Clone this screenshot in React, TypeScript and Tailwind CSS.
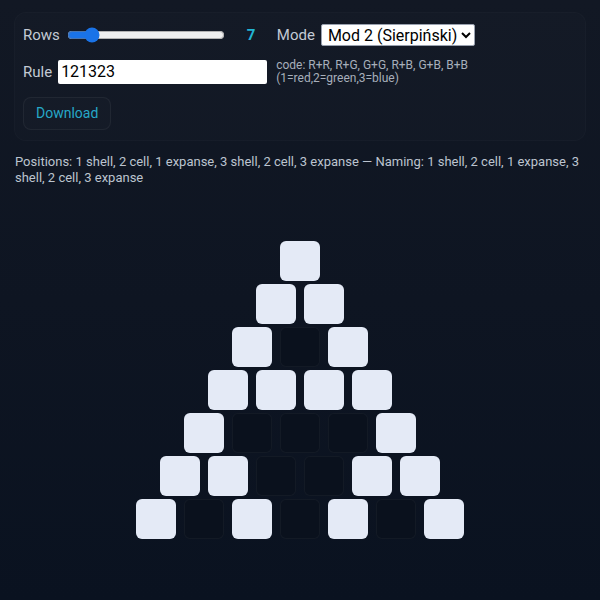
import React, { useState } from "react";

const ROWS_DEFAULT = 7;

function pascalMod2(rows: number): number[][] {
  const out: number[][] = [];
  let prev: number[] = [];
  for (let n = 0; n < rows; n++) {
    const row: number[] = [];
    for (let k = 0; k <= n; k++) {
      if (k === 0 || k === n) row.push(1);
      else row.push((prev[k - 1] + prev[k]) % 2);
    }
    out.push(row);
    prev = row;
  }
  return out;
}

export default function App() {
  const [rows, setRows] = useState(ROWS_DEFAULT);
  const [rule, setRule] = useState("121323");
  const tri = pascalMod2(rows);

  return (
    <div
      className="min-h-[600px] w-full bg-gradient-to-b from-[#121824] to-[#0a1220] px-[14px] pt-[12px] text-[#cbd2dc]"
      style={{ fontFamily: "Roboto, 'Noto Sans', sans-serif" }}
    >
      <div className="w-[572px] rounded-xl border border-white/[0.02] bg-white/[0.01] px-2 pt-[10px] pb-[10px]">
        <div className="flex h-[24px] items-center">
          <span className="text-[15px] text-[#c3cad4]">Rows</span>
          <input
            type="range"
            min={1}
            max={50}
            value={rows}
            onChange={(e) => setRows(Number(e.target.value))}
            className="ml-[7px] w-[158px] accent-[#1a73e8]"
          />
          <span className="ml-[22px] w-[10px] text-[15px] font-bold text-[#22b4d4]">{rows}</span>
          <span className="ml-[20px] text-[15px] text-[#c3cad4]">Mode</span>
          <select className="ml-[6px] h-[22px] rounded-[2px] border border-gray-400 bg-white pl-[2px] text-[16px] leading-none text-black">
            <option>Mod 2 (Sierpiński)</option>
          </select>
        </div>

        <div className="mt-[12px] flex items-center">
          <span className="text-[15px] text-[#c3cad4]">Rule</span>
          <input
            value={rule}
            onChange={(e) => setRule(e.target.value)}
            className="ml-[6px] h-[24px] w-[209px] rounded-[2px] bg-white px-[3px] text-[16px] text-black outline-none"
          />
          <div className="ml-[9px] text-[12px] leading-[13px] text-[#a7afbb]">
            <div>code: R+R, R+G, G+G, R+B, G+B, B+B</div>
            <div>(1=red,2=green,3=blue)</div>
          </div>
        </div>

        <button className="mt-[12px] h-[33px] rounded-lg border border-white/[0.05] bg-white/[0.01] px-[12px] text-[14px] text-[#26a8c8]">
          Download
        </button>
      </div>

      <p className="mt-[13px] pl-[1px] text-[13px] leading-[16px] text-[#bcc4cf]">
        Positions: 1 shell, 2 cell, 1 expanse, 3 shell, 2 cell, 3 expanse — Naming: 1 shell, 2 cell, 1 expanse, 3 shell,
        2 cell, 3 expanse
      </p>

      <div className="mt-[55px] -mx-[14px] flex flex-col items-center gap-[3px]">
        {tri.map((row, i) => (
          <div key={i} className="flex gap-[8px]">
            {row.map((v, j) => (
              <div
                key={j}
                className={
                  v
                    ? "h-[40px] w-[40px] rounded-[6px] bg-[#e4eaf6]"
                    : "h-[40px] w-[40px] rounded-[6px] border border-white/[0.04] bg-[#0a111d]"
                }
              />
            ))}
          </div>
        ))}
      </div>
    </div>
  );
}
